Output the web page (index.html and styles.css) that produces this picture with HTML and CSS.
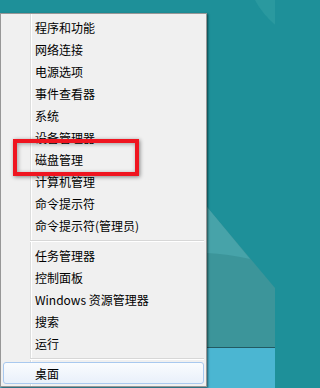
FILE: index.html
```html
<!DOCTYPE html>
<html lang="zh-CN">
<head>
<meta charset="utf-8">
<title>Win+X 菜单</title>
<link rel="stylesheet" href="styles.css">
</head>
<body>
<div class="desktop">
  <svg class="wallpaper" width="275" height="388" viewBox="0 0 275 388" xmlns="http://www.w3.org/2000/svg">
    <rect x="0" y="0" width="275" height="388" fill="#1e9099"/>
    <circle cx="330" cy="-40" r="85" fill="#2a999f"/>
    <polygon points="207,207 275,288 275,347 207,347" fill="#3c959a"/>
    <path d="M207,207 L250,259 Q228,254 207,253 Z" fill="#47a3a9"/>
    <rect x="0" y="347" width="275" height="1" fill="#225a62"/>
    <rect x="0" y="348" width="275" height="40" fill="#4bb6d2"/>
  </svg>
  <div class="menu">
    <div class="item">程序和功能</div>
    <div class="item">网络连接</div>
    <div class="item">电源选项</div>
    <div class="item">事件查看器</div>
    <div class="item">系统</div>
    <div class="item">设备管理器</div>
    <div class="item">磁盘管理</div>
    <div class="item">计算机管理</div>
    <div class="item">命令提示符</div>
    <div class="item">命令提示符(管理员)</div>
    <div class="sep"></div>
    <div class="item">任务管理器</div>
    <div class="item">控制面板</div>
    <div class="item">Windows 资源管理器</div>
    <div class="item">搜索</div>
    <div class="item">运行</div>
    <div class="sep"></div>
    <div class="item item-hover">桌面</div>
    <div class="highlight"></div>
  </div>
</div>
</body>
</html>
```
FILE: styles.css
```css
html, body {
  margin: 0;
  padding: 0;
}

body {
  width: 275px;
  height: 388px;
  overflow: hidden;
  background: #1e9099;
  font-family: "Noto Sans CJK SC", "Noto Sans", sans-serif;
}

.desktop {
  display: grid;
  width: 275px;
  height: 388px;
}

.wallpaper {
  grid-area: 1 / 1;
  display: block;
}

.menu {
  grid-area: 1 / 1;
  align-self: start;
  justify-self: start;
  position: relative;
  margin-top: 13px;
  width: 207px;
  box-sizing: border-box;
  padding: 2px 0;
  border: 1px solid #979797;
  background:
    linear-gradient(to right, transparent 29px, #dcdddd 29px, #dcdddd 30px, #ffffff 30px, #ffffff 31px, transparent 31px),
    #f0f0f0;
  box-shadow: 1px 1px 2px rgba(0, 0, 0, 0.55);
}

.item {
  height: 22px;
  line-height: 22px;
  margin: 0 2px;
  padding-left: 31px;
  border: 1px solid transparent;
  box-sizing: border-box;
  font-size: 12px;
  color: #000;
  white-space: nowrap;
}

.item-hover {
  border-color: #a9c9ef;
  border-radius: 3px;
  background: linear-gradient(to bottom, #fafcfe, #e9f0fa);
}

.sep {
  margin: 4px 2px 2px 29px;
  border-top: 1px solid #d7d7d7;
  border-bottom: 1px solid #ffffff;
}

.highlight {
  position: absolute;
  left: 12px;
  top: 125px;
  width: 126px;
  height: 37px;
  box-sizing: border-box;
  border: 4px solid #ef1520;
  box-shadow: 1px 1px 4px rgba(0, 0, 0, 0.45), inset 1px 1px 4px rgba(0, 0, 0, 0.35);
}
```
